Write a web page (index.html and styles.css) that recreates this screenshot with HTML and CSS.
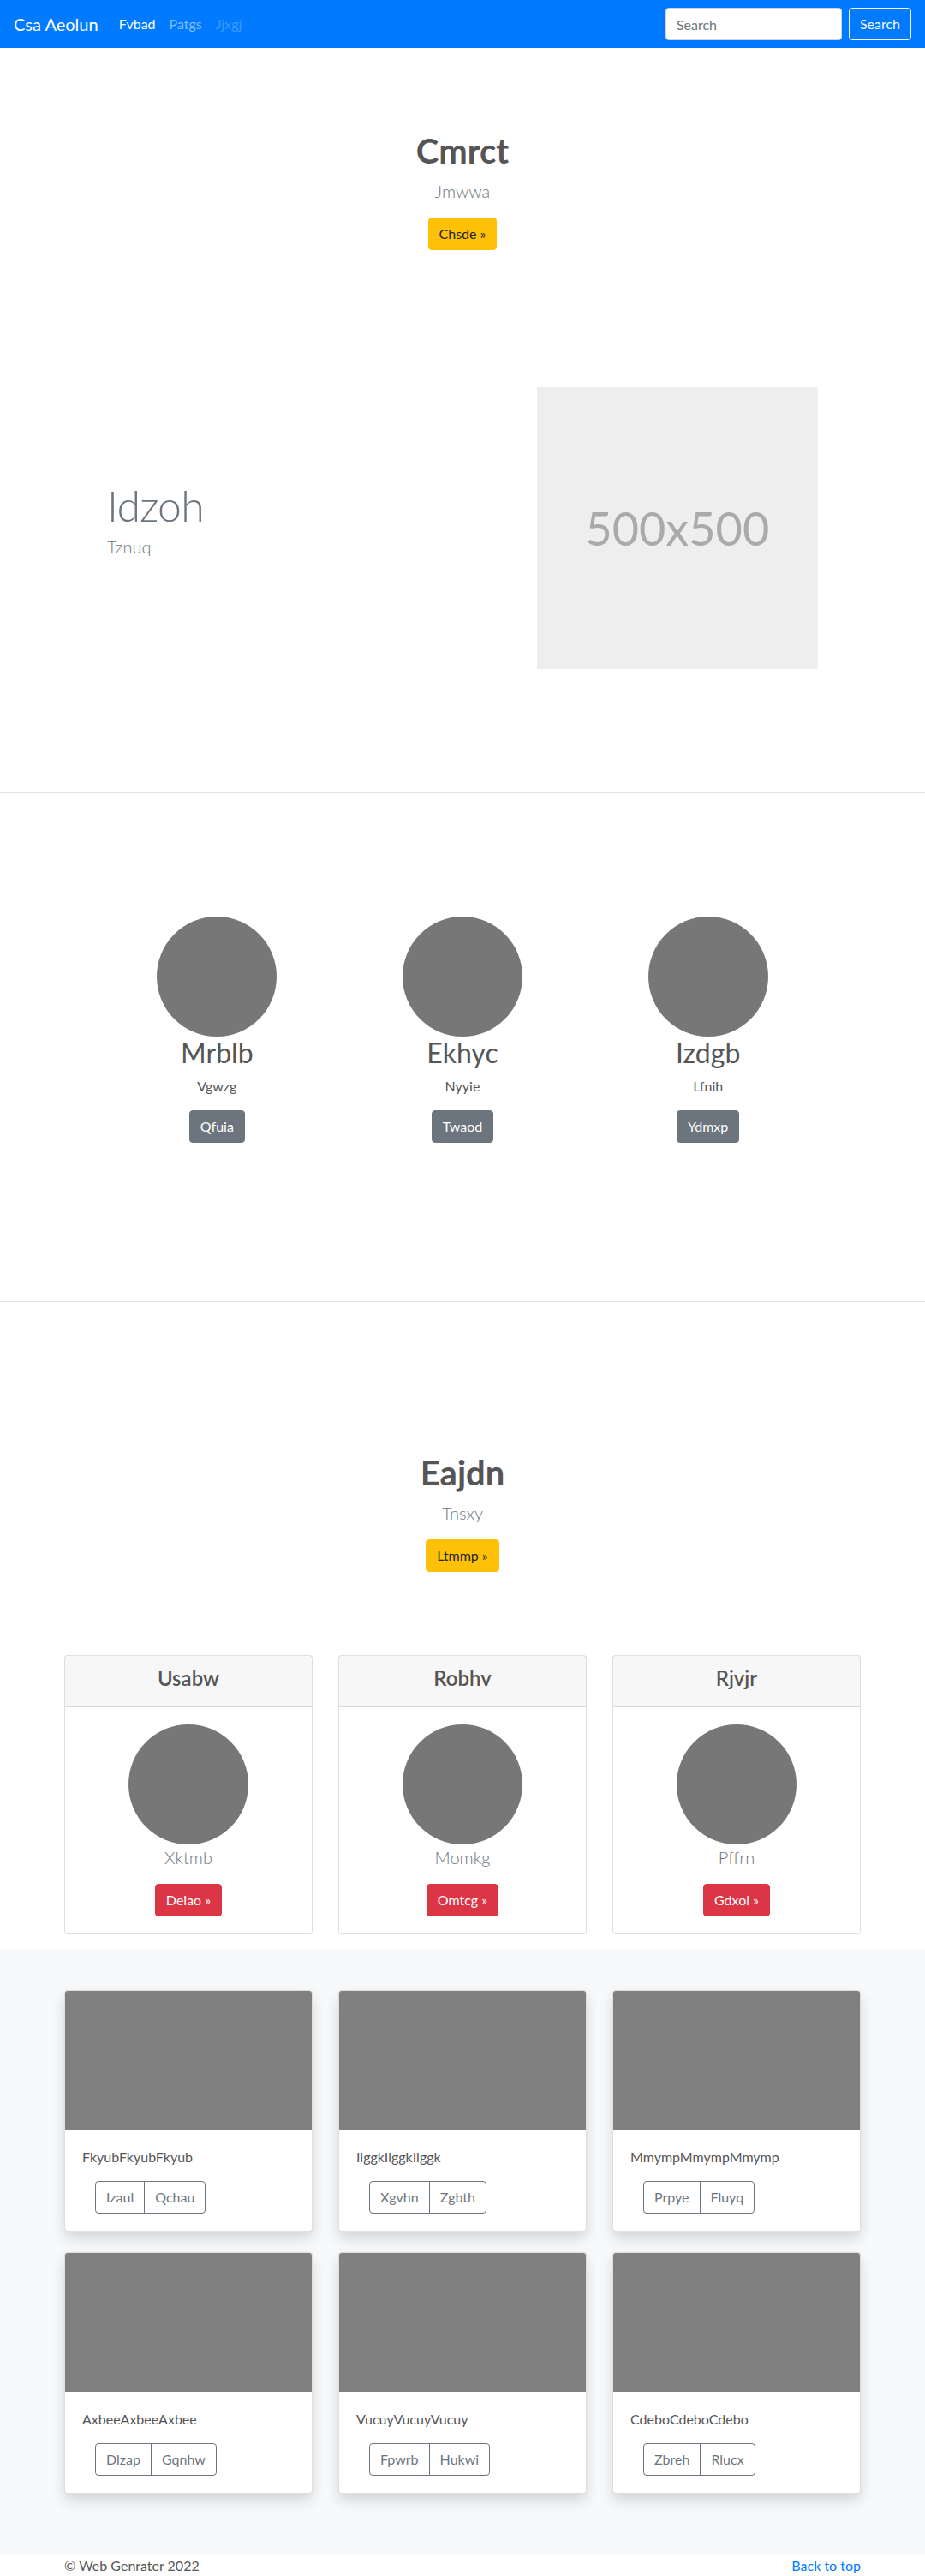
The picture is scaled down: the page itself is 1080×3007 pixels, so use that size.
FILE: index.html
```html
<!DOCTYPE html>
<html lang="en">
<head>
<meta charset="utf-8">
<title>Csa Aeolun</title>
<link rel="stylesheet" href="styles.css">
</head>
<body>
<nav class="navbar">
  <a class="brand" href="#">Csa Aeolun</a>
  <ul class="nav-links">
    <li><a class="nav-link active" href="#">Fvbad</a></li>
    <li><a class="nav-link" href="#">Patgs</a></li>
    <li><a class="nav-link disabled" href="#">Jjxgj</a></li>
  </ul>
  <form class="search">
    <input class="search-input" type="text" placeholder="Search">
    <button class="btn btn-outline-light" type="button">Search</button>
  </form>
</nav>

<section class="hero hero-first">
  <h1 class="hero-title">Cmrct</h1>
  <p class="lead">Jmwwa</p>
  <a class="btn btn-warning" href="#">Chsde &raquo;</a>
</section>

<section class="featurette">
  <div class="feat-text">
    <h2 class="feat-heading">Idzoh</h2>
    <p class="lead">Tznuq</p>
  </div>
  <div class="feat-media">
    <div class="placeholder">500x500</div>
  </div>
</section>

<hr class="divider divider-one">

<section class="marketing">
  <div class="mk-col">
    <div class="circle"></div>
    <h2 class="mk-title">Mrblb</h2>
    <p class="mk-text">Vgwzg</p>
    <a class="btn btn-secondary" href="#">Qfuia</a>
  </div>
  <div class="mk-col">
    <div class="circle"></div>
    <h2 class="mk-title">Ekhyc</h2>
    <p class="mk-text">Nyyie</p>
    <a class="btn btn-secondary" href="#">Twaod</a>
  </div>
  <div class="mk-col">
    <div class="circle"></div>
    <h2 class="mk-title">Izdgb</h2>
    <p class="mk-text">Lfnih</p>
    <a class="btn btn-secondary" href="#">Ydmxp</a>
  </div>
</section>

<hr class="divider divider-two">

<section class="hero hero-second">
  <h1 class="hero-title">Eajdn</h1>
  <p class="lead">Tnsxy</p>
  <a class="btn btn-warning" href="#">Ltmmp &raquo;</a>
</section>

<section class="deck">
  <div class="pcard">
    <div class="pcard-header"><h4 class="pcard-title">Usabw</h4></div>
    <div class="pcard-body">
      <div class="circle"></div>
      <p class="lead">Xktmb</p>
      <a class="btn btn-danger" href="#">Deiao &raquo;</a>
    </div>
  </div>
  <div class="pcard">
    <div class="pcard-header"><h4 class="pcard-title">Robhv</h4></div>
    <div class="pcard-body">
      <div class="circle"></div>
      <p class="lead">Momkg</p>
      <a class="btn btn-danger" href="#">Omtcg &raquo;</a>
    </div>
  </div>
  <div class="pcard">
    <div class="pcard-header"><h4 class="pcard-title">Rjvjr</h4></div>
    <div class="pcard-body">
      <div class="circle"></div>
      <p class="lead">Pffrn</p>
      <a class="btn btn-danger" href="#">Gdxol &raquo;</a>
    </div>
  </div>
</section>

<section class="album">
  <div class="album-grid">
    <div class="acard">
      <div class="acard-img"></div>
      <div class="acard-body">
        <p class="acard-text">FkyubFkyubFkyub</p>
        <div class="btn-group"><a class="btn btn-outline-secondary" href="#">Izaul</a><a class="btn btn-outline-secondary" href="#">Qchau</a></div>
      </div>
    </div>
    <div class="acard">
      <div class="acard-img"></div>
      <div class="acard-body">
        <p class="acard-text">IlggkIlggkIlggk</p>
        <div class="btn-group"><a class="btn btn-outline-secondary" href="#">Xgvhn</a><a class="btn btn-outline-secondary" href="#">Zgbth</a></div>
      </div>
    </div>
    <div class="acard">
      <div class="acard-img"></div>
      <div class="acard-body">
        <p class="acard-text">MmympMmympMmymp</p>
        <div class="btn-group"><a class="btn btn-outline-secondary" href="#">Prpye</a><a class="btn btn-outline-secondary" href="#">Fluyq</a></div>
      </div>
    </div>
    <div class="acard">
      <div class="acard-img"></div>
      <div class="acard-body">
        <p class="acard-text">AxbeeAxbeeAxbee</p>
        <div class="btn-group"><a class="btn btn-outline-secondary" href="#">Dlzap</a><a class="btn btn-outline-secondary" href="#">Gqnhw</a></div>
      </div>
    </div>
    <div class="acard">
      <div class="acard-img"></div>
      <div class="acard-body">
        <p class="acard-text">VucuyVucuyVucuy</p>
        <div class="btn-group"><a class="btn btn-outline-secondary" href="#">Fpwrb</a><a class="btn btn-outline-secondary" href="#">Hukwi</a></div>
      </div>
    </div>
    <div class="acard">
      <div class="acard-img"></div>
      <div class="acard-body">
        <p class="acard-text">CdeboCdeboCdebo</p>
        <div class="btn-group"><a class="btn btn-outline-secondary" href="#">Zbreh</a><a class="btn btn-outline-secondary" href="#">Rlucx</a></div>
      </div>
    </div>
  </div>
</section>

<footer class="footer">
  <p class="footer-copy">&copy; Web Genrater 2022</p>
  <p class="footer-top"><a href="#">Back to top</a></p>
</footer>
</body>
</html>
```

FILE: styles.css
```css
* { box-sizing: border-box; }

body {
  margin: 0;
  font-family: Lato, "Segoe UI", Roboto, "Liberation Sans", Arial, sans-serif;
  font-size: 16px;
  line-height: 1.5;
  color: #555;
  background: #fff;
}

a { text-decoration: none; }

/* Navbar */
.navbar {
  display: flex;
  align-items: center;
  height: 56px;
  padding: 8px 16px;
  background: #007bff;
}
.brand {
  font-size: 20px;
  line-height: 30px;
  padding: 5px 0;
  margin-right: 16px;
  color: #fff;
}
.nav-links {
  display: flex;
  list-style: none;
  margin: 0;
  padding: 0;
}
.nav-link {
  display: block;
  padding: 8px;
  line-height: 24px;
  color: rgba(255,255,255,.5);
}
.nav-link.active { color: #fff; }
.nav-link.disabled { color: rgba(255,255,255,.25); }
.search {
  margin-left: auto;
  display: flex;
  align-items: center;
}
.search-input {
  width: 206px;
  height: 38px;
  padding: 6px 12px;
  margin-right: 8px;
  font-family: inherit;
  font-size: 16px;
  color: #495057;
  border: 1px solid #ced4da;
  border-radius: 4px;
  background: #fff;
}
.search-input::placeholder { color: #6c757d; }

/* Buttons */
.btn {
  display: inline-block;
  padding: 6px 12px;
  font-family: inherit;
  font-size: 16px;
  line-height: 24px;
  border: 1px solid transparent;
  border-radius: 4px;
  background: transparent;
  vertical-align: middle;
  cursor: pointer;
}
.btn-outline-light { color: #f8f9fa; border-color: #f8f9fa; }
.btn-warning { background: #ffc107; border-color: #ffc107; color: #212529; }
.btn-secondary { background: #6c757d; border-color: #6c757d; color: #fff; }
.btn-danger { background: #dc3545; border-color: #dc3545; color: #fff; }
.btn-outline-secondary { color: #6c757d; border-color: #6c757d; }

.lead {
  font-size: 20px;
  font-weight: 300;
  line-height: 1.5;
  margin: 0 0 16px;
  color: #6c757d;
}

/* Hero */
.hero { text-align: center; }
.hero-first { padding-top: 96px; }
.hero-second { padding-top: 175px; }
.hero-title {
  font-size: 40px;
  line-height: 1.2;
  font-weight: 700;
  margin: 0 0 8px;
  color: #555;
}

/* Featurette */
.featurette {
  width: 860px;
  margin: 160px auto 0;
  display: grid;
  grid-template-columns: 7fr 5fr;
  align-items: center;
}
.feat-text, .feat-media { padding: 0 15px; }
.feat-heading {
  font-size: 50px;
  line-height: 1;
  font-weight: 300;
  letter-spacing: -0.8px;
  margin: 0 0 8px;
  color: #6c757d;
}
.placeholder {
  width: 100%;
  height: 329px;
  background: #eee;
  color: #aaa;
  font-size: 54px;
  display: flex;
  align-items: center;
  justify-content: center;
}

/* Dividers */
.divider {
  border: 0;
  border-top: 1px solid rgba(0,0,0,.1);
  margin: 0;
}
.divider-one { margin-top: 144px; }
.divider-two { margin-top: 185px; }

/* Marketing */
.marketing {
  width: 860px;
  margin: 0 auto;
  padding-top: 144px;
  display: grid;
  grid-template-columns: repeat(3, 1fr);
}
.mk-col {
  padding: 0 15px;
  text-align: center;
}
.circle {
  width: 140px;
  height: 140px;
  border-radius: 50%;
  background: #777;
  margin: 0 auto;
}
.mk-title {
  font-size: 32px;
  line-height: 1.2;
  font-weight: 400;
  margin: 0 0 8px;
  color: #555;
}
.mk-text { margin: 0 0 16px; }

/* Pricing deck */
.deck {
  width: 960px;
  margin: 97px auto 0;
  padding: 0 15px;
  display: grid;
  grid-template-columns: repeat(3, 1fr);
  column-gap: 30px;
}
.pcard {
  border: 1px solid rgba(0,0,0,.125);
  border-radius: 4px;
  text-align: center;
  margin-bottom: 17px;
  background: #fff;
}
.pcard-header {
  padding: 12px 20px;
  background: rgba(0,0,0,.03);
  border-bottom: 1px solid rgba(0,0,0,.125);
}
.pcard-title {
  font-size: 24px;
  line-height: 1.2;
  font-weight: 600;
  margin: 0 0 6px;
  color: #555;
}
.pcard-body { padding: 20px; }

/* Album */
.album {
  background: #f8f9fa;
  padding: 48px 0;
}
.album-grid {
  width: 960px;
  margin: 0 auto;
  padding: 0 15px;
  display: grid;
  grid-template-columns: repeat(3, 1fr);
  column-gap: 30px;
}
.acard {
  background: #fff;
  border: 1px solid rgba(0,0,0,.125);
  border-radius: 4px;
  overflow: hidden;
  box-shadow: 0 8px 16px rgba(0,0,0,.15);
  margin-bottom: 24px;
}
.acard-img {
  width: 100%;
  aspect-ratio: 16 / 9;
  background: #808080;
}
.acard-body { padding: 20px; }
.acard-text { margin: 0 0 16px; color: #555; }
.btn-group {
  display: inline-flex;
  margin-left: 15px;
}
.btn-group .btn:first-child { border-top-right-radius: 0; border-bottom-right-radius: 0; }
.btn-group .btn:last-child { border-top-left-radius: 0; border-bottom-left-radius: 0; margin-left: -1px; }

/* Footer */
.footer {
  width: 960px;
  margin: 0 auto;
  padding: 0 15px 48px;
  display: flex;
  justify-content: space-between;
}
.footer p { margin: 0 0 16px; }
.footer-copy { color: #555; }
.footer-top a { color: #007bff; }
```
